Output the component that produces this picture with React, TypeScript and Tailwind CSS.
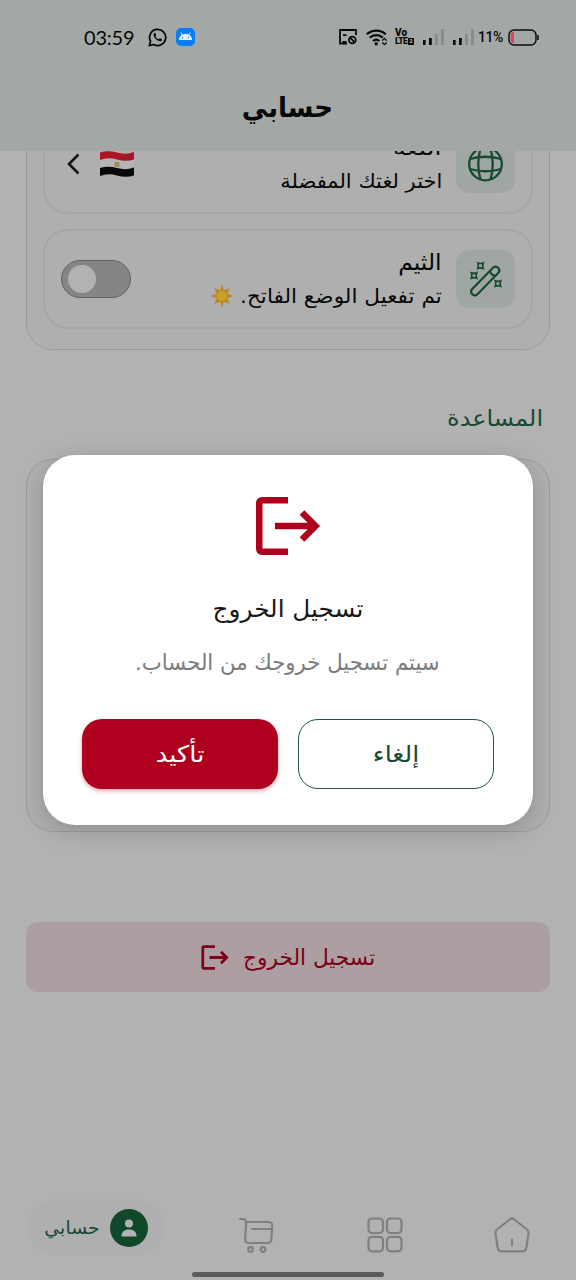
import type { ReactNode } from "react";

function Label({ box, text, children }: { box: string; text: string; children: ReactNode }) {
  return (
    <div dir="rtl" className={`flex shrink-0 items-center justify-start whitespace-nowrap ${box}`}>
      <span className={`block shrink-0 origin-right ${text}`}>{children}</span>
    </div>
  );
}

function Signal() {
  return (
    <svg width="21" height="16" viewBox="0 0 21 16">
      <rect x="0" y="11" width="2.6" height="5" fill="#0b0d0c" />
      <rect x="6" y="9" width="2.8" height="7" fill="#0b0d0c" />
      <rect x="12" y="5" width="2.8" height="11" fill="#878b89" />
      <rect x="18" y="0" width="2.8" height="16" fill="#878b89" />
    </svg>
  );
}

function StatusBar() {
  return (
    <div className="flex h-[74px] items-center pl-[84px] pr-[36px] text-[#060807]">
      <span className="w-[51px] whitespace-nowrap font-[Lato] text-[20px] leading-none tracking-[-0.2px]">03:59</span>
      <svg className="ml-[13px]" width="19" height="19" viewBox="0 0 24 24" fill="none">
        <path d="M1.7 22.3l1.5-5.6A10.2 10.2 0 1 1 7.2 20.8z" stroke="currentColor" strokeWidth="2.2" strokeLinejoin="round" />
        <path d="M8.4 6.4c-.8.3-1.4 1.2-1.3 2.2.3 3.8 4.3 7.8 8.2 8.2 1 .1 2.1-.6 2.3-1.6.1-.7 0-.9-.5-1.2l-1.8-.9c-.5-.2-.8 0-1.3.7-.3.4-.6.5-1 .3-1.5-.7-2.8-2-3.500-3.500-.1-.3 0-.6.3-.9.6-.6.7-.8.5-1.300l-.8-1.800c-.2-.4-.5-.5-1.100-.2z" fill="currentColor" />
      </svg>
      <svg className="ml-[9px]" width="19" height="18" viewBox="0 0 19 18">
        <rect width="19" height="18" rx="5" fill="#0a7cf5" />
        <path d="M3 12a6.500 6.200 0 0 1 13 0z" fill="#e9f2fb" />
        <path d="M6.200 7L4.900 4.600M12.800 7l1.300-2.400" stroke="#e9f2fb" strokeWidth=".9" />
        <circle cx="6.700" cy="9.700" r=".7" fill="#0a7cf5" />
        <circle cx="12.300" cy="9.700" r=".7" fill="#0a7cf5" />
      </svg>
      <div className="ml-auto flex items-center">
        <svg width="18" height="16" viewBox="0 0 18 16" fill="none" stroke="currentColor" strokeWidth="1.800">
          <path d="M17 6V1H1v13.500h7M4 6.200h3.500M3.500 13h4" />
          <circle cx="13.300" cy="11" r="3.400" />
          <path d="M11 8.700l4.700 4.700" />
        </svg>
        <svg className="ml-[9px]" width="22" height="17" viewBox="0 0 22 17" fill="none" stroke="currentColor" strokeWidth="2.200">
          <path d="M.8 5.300a14 14 0 0 1 19 0M3.800 8.600a9.500 9.500 0 0 1 13 0M7 12a5 5 0 0 1 6.400 0" />
          <circle cx="10.200" cy="14.800" r="1.700" fill="currentColor" stroke="none" />
          <path d="M16.300 11.600l2.200-2.200 2.200 2.200M16.300 13.500l2.200 2.200 2.200-2.200" strokeWidth="1.300" />
        </svg>
        <div className="ml-[7px] flex w-[20px] flex-col font-[Roboto] font-black leading-none">
          <span className="h-[8px] text-[10px] leading-[8px]">Vo</span>
          <span className="flex h-[8px] items-center text-[8.500px] leading-[8px] tracking-[-0.600px]">
            LTE<b className="ml-[1px] flex h-[7px] w-[6px] items-center justify-center bg-[#060807] text-[6px] tracking-normal text-[#a3a8a6]">2</b>
          </span>
        </div>
        <div className="ml-[8px] flex gap-[9px]"><Signal /><Signal /></div>
        <span className="ml-[4px] w-[27px] whitespace-nowrap font-[Roboto] text-[14px] font-medium leading-none tracking-[-0.500px]">11%</span>
        <svg className="ml-[3px]" width="32" height="17" viewBox="0 0 32 17" fill="none">
          <rect x="1" y="1" width="27" height="15" rx="5" stroke="#0b0d0c" strokeWidth="1.500" />
          <path d="M6 3v11c-2 0-3.300-1-3.300-2.500v-6C2.700 4 4 3 6 3z" fill="#e04452" />
          <path d="M30 6v5" stroke="#0b0d0c" strokeWidth="1.500" />
        </svg>
      </div>
    </div>
  );
}

function Logout({ className }: { className: string }) {
  return (
    <svg className={className} viewBox="0 0 66 58" fill="none" stroke="currentColor" strokeWidth="6.500">
      <path d="M33 3.250H7.500Q4.250 3.250 4.250 6.500v45q0 3.250 3.250 3.250H33M20 29h41M47 15.500L60.500 29 47 42.500" />
    </svg>
  );
}

function Globe() {
  return (
    <svg width="36" height="36" viewBox="0 0 36 36" fill="none" stroke="#174a30" strokeWidth="2.300">
      <circle cx="17.500" cy="18" r="16.300" />
      <path d="M12.500 2.500q-4.500 15.500 0 31M22.500 2.500q4.500 15.500 0 31M2 13q15.500-4.500 31 0M2 23q15.500 4.500 31 0" />
    </svg>
  );
}

function Wand() {
  return (
    <svg width="32" height="36" viewBox="0 0 32 36" fill="none" stroke="#174a30" strokeWidth="2.200">
      <path d="M2 28.200L23.200 6.600a3.700 3.700 0 0 1 5.200 5.200L7.200 33.400a3.700 3.700 0 0 1-5.200-5.200zM20 10q1 4 5 5" />
      <path d="M7.800 2q2.700 1 5.400 0-1 2.700 0 5.400-2.700-1-5.400 0 1-2.700 0-5.400zM1.300 11.800q2.700 1 5.400 0-1 2.700 0 5.400-2.700-1-5.400 0 1-2.700 0-5.400zM25.300 19.800q2.700 1 5.400 0-1 2.700 0 5.400-2.700-1-5.400 0 1-2.700 0-5.400z" strokeWidth="1.700" />
    </svg>
  );
}

function Flag() {
  return (
    <svg width="34" height="26" viewBox="0 0 34 26">
      <path d="M0 1.500q8-2.500 17 0t17-.5v23.500q-8 2.500-17 0t-17 .5z" fill="#b5b5b5" />
      <path d="M0 1.500q8-2.500 17 0t17-.5v7.500q-8 2.500-17 0t-17 .5z" fill="#a91527" />
      <path d="M0 17q8-2.500 17 0t17-.5v8q-8 2.500-17 0t-17 .5z" fill="#080808" />
      <path d="M14.500 11h5v4.500q-2.500 1-5 0z" fill="#a08a52" />
    </svg>
  );
}

function Sun() {
  return (
    <svg width="24" height="24" viewBox="0 0 24 24">
      <path d="M12 .5l1.800 6L19.500 4l-2.300 5.800L23.500 12l-6.300 2.200L19.500 20l-5.700-2.500-1.800 6-1.800-6L4.500 20l2.300-5.800L.5 12l6.300-2.200L4.500 4l5.700 2.500z" fill="#bb861a" />
      <circle cx="12" cy="12" r="5" fill="#c9a025" />
    </svg>
  );
}

function Tile({ children }: { children: ReactNode }) {
  return <div className="flex h-[58px] w-[59px] shrink-0 items-center justify-center rounded-[13px] bg-[#a0a6a3]">{children}</div>;
}

export default function App() {
  return (
    <div className="relative flex h-[1280px] w-[576px] flex-col overflow-hidden bg-[#b2b2b2] font-['DejaVu_Sans',sans-serif]">
      <header className="z-10 h-[151px] shrink-0 bg-[#a3a8a6]">
        <StatusBar />
        <div className="flex h-[68px] items-center justify-center">
          <Label box="w-[90px] h-[40px]" text="text-[28px] font-bold text-[#060807] scale-x-[0.93]">حسابي</Label>
        </div>
      </header>

      <main className="flex flex-1 flex-col px-[26px]">
        <section className="-mt-[60px] flex h-[259px] shrink-0 flex-col justify-end gap-[15px] rounded-[27px] border border-[#9c9c9c] bg-[#afafaf] px-4 pb-5">
          <div dir="rtl" className="flex h-[100px] items-center rounded-[25px] border-2 border-[#a6a6a6] px-4">
            <Tile><Globe /></Tile>
            <div className="mr-[14px] flex flex-col">
              <Label box="h-[34px] w-[48px]" text="text-[22px] text-[#080808] scale-x-[1.14]">اللغة</Label>
              <Label box="h-[34px] w-[162px]" text="text-[20px] text-[#080808] scale-x-[1.05]">اختر لغتك المفضلة</Label>
            </div>
            <div className="mr-auto flex items-center gap-[20px] pl-[5px]">
              <Flag />
              <svg width="14" height="22" viewBox="0 0 14 22" fill="none" stroke="#151515" strokeWidth="2.600"><path d="M12.500 1.500L3 11l9.500 9.500" /></svg>
            </div>
          </div>
          <div dir="rtl" className="flex h-[100px] items-center rounded-[25px] border-2 border-[#a6a6a6] px-4">
            <Tile><Wand /></Tile>
            <div className="mr-[14px] flex flex-col">
              <Label box="h-[34px] w-[44px]" text="text-[23px] text-[#080808] scale-x-[1.02]">الثيم</Label>
              <div className="flex items-center gap-[7px]">
                <Label box="h-[34px] w-[201px]" text="text-[20px] text-[#080808] scale-x-[1.08]">تم تفعيل الوضع الفاتح.</Label>
                <Sun />
              </div>
            </div>
            <div dir="ltr" className="mr-auto flex h-[38px] w-[70px] items-center rounded-full border-[1.500px] border-[#616161] bg-[#858585] pl-[6px]">
              <div className="size-[28px] rounded-full bg-[#b2b2b2]" />
            </div>
          </div>
        </section>

        <div dir="rtl" className="mt-[48px] pr-[7px]">
          <Label box="h-[40px] w-[96px]" text="text-[22px] text-[#174a30] scale-x-[1.09]">المساعدة</Label>
        </div>

        <section className="mt-[21px] h-[373px] shrink-0 rounded-[27px] border border-[#9c9c9c] bg-[#afafaf]" />

        <button dir="rtl" className="mt-[90px] flex h-[70px] shrink-0 items-center justify-center gap-[15px] rounded-[12px] bg-[#ad9fa1] text-[#7c0017]">
          <Label box="h-[40px] w-[132px]" text="text-[22px] scale-x-[0.985]">تسجيل الخروج</Label>
          <Logout className="h-[25px] w-[28px]" />
        </button>
      </main>

      <nav className="flex h-[81px] shrink-0 items-start pl-[28px] pr-[46px]">
        <div className="flex h-[57px] w-[136px] items-center justify-end gap-[10px] rounded-full bg-[#afafaf] pr-4">
          <Label box="h-[34px] w-[55px]" text="text-[18px] text-[#174a30] scale-x-[1.05]">حسابي</Label>
          <div className="flex size-[38px] items-center justify-center rounded-full bg-[#10482a]">
            <svg width="16" height="18" viewBox="0 0 16 18" fill="#b2b2b2"><circle cx="8" cy="4.500" r="4" /><path d="M.5 17.500c0-4.500 2.800-7 7.500-7s7.500 2.500 7.500 7z" /></svg>
          </div>
        </div>
        <div className="ml-[75px] mt-[18px] flex flex-1 justify-between">
          <svg width="36" height="36" viewBox="0 0 36 36" fill="none" stroke="#808080" strokeWidth="2.200">
            <path d="M1 2h3q2.500 0 3 3h22q4.500 0 4.300 4l-1 14q-.3 3-4 3H10q-4 0-3.800-4l1-17M13 12h20" strokeLinecap="round" />
            <circle cx="11.500" cy="32.500" r="2.300" /><circle cx="24" cy="32.500" r="2.300" />
          </svg>
          <svg width="36" height="36" viewBox="0 0 36 36" fill="none" stroke="#808080" strokeWidth="2.200">
            <rect x="1.500" y="1.500" width="14.500" height="14.500" rx="3.500" /><rect x="20" y="1.500" width="14.500" height="14.500" rx="3.500" />
            <rect x="1.500" y="19.800" width="14.500" height="14.500" rx="3.500" /><rect x="20" y="19.800" width="14.500" height="14.500" rx="3.500" />
          </svg>
          <svg width="36" height="36" viewBox="0 0 36 36" fill="none" stroke="#808080" strokeWidth="2.200" strokeLinecap="round">
            <path d="M15.500 2.500q2.500-2 5 0L33 12.500q1.800 1.500 1.500 4L32.500 30q-.6 4.300-4.500 4.300H8q-3.900 0-4.500-4.300L1.500 16.500q-.3-2.500 1.500-4zM18 22.500v6" />
          </svg>
        </div>
      </nav>
      <div className="absolute bottom-[3px] left-[192px] h-[5px] w-[192px] rounded-full bg-[#5b5b5b]" />

      <div role="dialog" className="absolute left-[43px] top-[455px] z-20 flex h-[370px] w-[490px] flex-col items-center rounded-[32px] bg-white pt-[42px] shadow-[0_6px_24px_rgba(0,0,0,0.18)]">
        <Logout className="h-[58px] w-[66px] text-[#ae001e]" />
        <Label box="mt-[32px] h-[44px] w-[150px]" text="text-[24px] text-[#181818] scale-x-[1.03]">تسجيل الخروج</Label>
        <Label box="mt-[11px] h-[40px] w-[304px]" text="text-[22px] text-[#7c7c7c] scale-x-[0.965]">سيتم تسجيل خروجك من الحساب.</Label>
        <div className="mt-[37px] flex gap-[20px]">
          <button className="flex h-[70px] w-[196px] items-center justify-center rounded-[20px] bg-[#ae001e] shadow-[0_2px_4px_rgba(174,0,30,0.35)]">
            <Label box="h-[40px] w-[48px]" text="text-[23px] text-white scale-x-[1.12]">تأكيد</Label>
          </button>
          <button className="flex h-[70px] w-[196px] items-center justify-center rounded-[20px] border-[1.500px] border-[#22573c]">
            <Label box="h-[40px] w-[47px]" text="text-[23px] text-[#174a30] scale-x-[1.1]">إلغاء</Label>
          </button>
        </div>
      </div>
    </div>
  );
}
